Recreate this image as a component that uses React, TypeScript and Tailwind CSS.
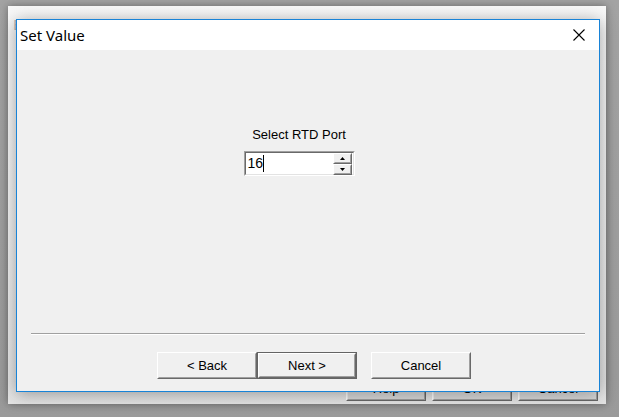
import { useState } from "react";

function Raised({ children, className = "" }: { children?: React.ReactNode; className?: string }) {
  // classic win32 3D raised edge
  return (
    <div className={`border border-t-white border-l-white border-r-[#696969] border-b-[#696969] ${className}`}>
      <div className="h-full w-full border border-t-[#f0f0f0] border-l-[#f0f0f0] border-r-[#a0a0a0] border-b-[#a0a0a0] flex items-center justify-center">
        {children}
      </div>
    </div>
  );
}

function SpinInput({ value }: { value: string }) {
  return (
    <div className="w-[111px] h-[25px] border border-t-[#a0a0a0] border-l-[#a0a0a0] border-r-white border-b-white">
      <div className="h-full w-full border border-t-[#696969] border-l-[#696969] border-r-[#e3e3e3] border-b-[#e3e3e3] bg-white flex items-center">
        <div className="flex-1 flex items-center pl-[2px] text-[14px] leading-[17px] text-black">
          <span>{value}</span>
          <span className="w-px h-[17px] bg-black" />
        </div>
        <div className="flex flex-col w-[19px] mr-px">
          <Raised className="h-[11px] bg-[#f0f0f0]">
            <svg width="5" height="3" viewBox="0 0 5 3">
              <path d="M2.5 0 L5 3 L0 3 Z" fill="#000" />
            </svg>
          </Raised>
          <Raised className="h-[11px] bg-[#f0f0f0]">
            <svg width="5" height="3" viewBox="0 0 5 3">
              <path d="M0 0 L5 0 L2.5 3 Z" fill="#000" />
            </svg>
          </Raised>
        </div>
      </div>
    </div>
  );
}

function DlgButton({ label, isDefault = false }: { label: string; isDefault?: boolean }) {
  if (isDefault) {
    return (
      <div className="w-[100px] h-[27px] border border-[#646464]">
        <Raised className="h-full w-full bg-[#f0f0f0]">
          <span className="text-[13px] text-black">{label}</span>
        </Raised>
      </div>
    );
  }
  return (
    <Raised className="w-[100px] h-[27px] bg-[#f0f0f0]">
      <span className="text-[13px] text-black">{label}</span>
    </Raised>
  );
}

export default function App() {
  const [port] = useState("16");

  return (
    <div
      className="relative w-[619px] h-[417px] overflow-hidden bg-gradient-to-b from-[#a3a3a3] to-[#9a9a9a]"
      style={{ fontFamily: '"Liberation Sans", Arial, sans-serif' }}
    >
      {/* window behind the dialog */}
      <div className="absolute left-[8px] top-[6px] w-[598px] h-[398px] bg-gradient-to-b from-[#f8f8f8] via-[#f0f0f0] to-[#e4e4e4] shadow-[0_0_8px_rgba(0,0,0,0.35)]">
        <div
          className="pl-[5px] pt-[9px] text-[15px] leading-[18px] text-[#b4b4b4]"
          style={{ fontFamily: '"Noto Sans", sans-serif' }}
        >
          Event Properties
        </div>
        <div className="absolute left-[338px] top-[371px] flex gap-[6px]">
          {["Help", "OK", "Cancel"].map((b) => (
            <Raised key={b} className="w-[80px] h-[24px] bg-gradient-to-b from-[#e8e8e8] to-[#d8d8d8]">
              <span className="text-[13px] text-black">{b}</span>
            </Raised>
          ))}
        </div>
      </div>

      {/* Set Value dialog */}
      <div className="absolute left-[16px] top-[19px] w-[584px] h-[373px] border border-[#1883d7] flex flex-col bg-[#f0f0f0] shadow-[0_2px_16px_rgba(0,0,0,0.35)]">
        <div className="h-[30px] bg-white flex items-center justify-between shrink-0">
          <span
            className="pl-[3px] text-[15px] text-black"
            style={{ fontFamily: '"Noto Sans", sans-serif' }}
          >
            Set Value
          </span>
          <svg width="12" height="12" viewBox="0 0 12 12" className="mr-[14px]">
            <path d="M0.5 0.5 L11.5 11.5 M11.5 0.5 L0.5 11.5" stroke="#000" strokeWidth="1.1" />
          </svg>
        </div>

        <div className="flex-1 flex flex-col">
          <div className="flex-1 flex flex-col items-center pr-[18px] pt-[77px]">
            <span className="text-[13px] leading-[16px] text-black">Select RTD Port</span>
            <div className="mt-[8px]">
              <SpinInput value={port} />
            </div>
          </div>

          <div className="mx-[14px] border-t border-t-[#a0a0a0] border-b border-b-white" />

          <div className="flex pl-[140px] mt-[17px] mb-[12px]">
            <DlgButton label="< Back" />
            <DlgButton label="Next >" isDefault />
            <div className="w-[14px]" />
            <DlgButton label="Cancel" />
          </div>
        </div>
      </div>
    </div>
  );
}
